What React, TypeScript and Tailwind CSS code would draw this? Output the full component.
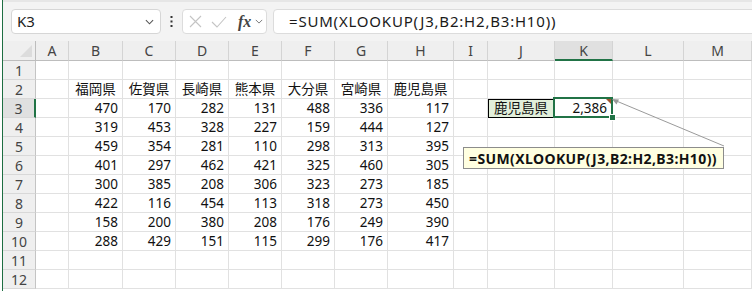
import React from 'react';

const COLS = ['A', 'B', 'C', 'D', 'E', 'F', 'G', 'H', 'I', 'J', 'K', 'L', 'M'];
const PREFS = ['福岡県', '佐賀県', '長崎県', '熊本県', '大分県', '宮崎県', '鹿児島県'];
const DATA = [
  [470, 170, 282, 131, 488, 336, 117],
  [319, 453, 328, 227, 159, 444, 127],
  [459, 354, 281, 110, 298, 313, 395],
  [401, 297, 462, 421, 325, 460, 305],
  [300, 385, 208, 306, 323, 273, 185],
  [422, 116, 454, 113, 318, 273, 450],
  [158, 200, 380, 208, 176, 249, 390],
  [288, 429, 151, 115, 299, 176, 417],
];
const FORMULA = '=SUM(XLOOKUP(J3,B2:H2,B3:H10))';

function Chevron({ className }: { className?: string }) {
  return (
    <svg className={className} viewBox="0 0 10 6" fill="none" stroke="currentColor" strokeWidth={1.2}>
      <path d="M1 1l4 4 4-4" />
    </svg>
  );
}

function TopBar() {
  return (
    <div className="h-[41px] bg-[#f3f3f3] border-t-2 border-[#e6e6e6] flex items-start pt-[7px] overflow-hidden">
      {/* Name box */}
      <div className="ml-[8px] w-[150px] h-[25px] shrink-0 bg-white border border-[#d6d6d6] rounded-[4px] flex items-center pl-[5px] pr-[6px]">
        <span className="flex-1 text-[15px] text-[#222]">K3</span>
        <Chevron className="w-[9px] h-[6px] text-[#555]" />
      </div>
      {/* More */}
      <div className="w-[21px] h-[25px] shrink-0 flex items-center justify-center">
        <svg className="w-[3px] h-[11px]" viewBox="0 0 3 11" fill="#333">
          <rect x="0.5" y="0" width="2" height="2" />
          <rect x="0.5" y="4.5" width="2" height="2" />
          <rect x="0.5" y="9" width="2" height="2" />
        </svg>
      </div>
      {/* Cancel / enter / fx */}
      <div className="w-[85px] h-[25px] shrink-0 bg-white border border-[#dcdcdc] rounded-[4px] flex items-center pl-[6px]">
        <svg className="w-[13px] h-[13px]" viewBox="0 0 13 13" fill="none" stroke="#c4c4c4" strokeWidth={1.1}>
          <path d="M1 1l11 11M12 1L1 12" />
        </svg>
        <svg className="ml-[9px] w-[16px] h-[12px]" viewBox="0 0 16 12" fill="none" stroke="#c4c4c4" strokeWidth={1.1}>
          <path d="M1 6l5 5L15 1" />
        </svg>
        <span className="ml-[11px] font-['Liberation_Serif',serif] italic font-bold text-[16px] leading-none text-[#444]">fx</span>
        <Chevron className="ml-[4px] w-[8px] h-[5px] text-[#777]" />
      </div>
      {/* Formula */}
      <div className="ml-[6px] w-[490px] h-[25px] shrink-0 bg-white border border-[#dcdcdc] rounded-l-[4px] flex items-center pl-[15px]">
        <span className="text-[15px] tracking-[0.8px] text-[#1a1a1a] whitespace-nowrap">{FORMULA}</span>
      </div>
    </div>
  );
}

function Grid() {
  const rows: React.ReactNode[] = [];

  // Column header row
  rows.push(
    <div key="corner" className="h-[20px] bg-[#efefef] border-r border-b border-[#bdbdbd] relative">
      <div className="absolute right-[3px] bottom-[3px] w-0 h-0 border-l-[12px] border-l-transparent border-b-[12px] border-b-[#dcdcdc]" />
    </div>
  );
  COLS.forEach((c) => {
    const sel = c === 'K';
    rows.push(
      <div
        key={'h' + c}
        className={`h-[20px] flex items-center justify-center text-[14px] text-[#444] border-r border-[#d4d4d4] ${
          sel ? 'bg-[#e0e0e0] border-b-2 border-b-[#217346]' : 'bg-[#efefef] border-b border-b-[#bdbdbd]'
        }`}
      >
        {c}
      </div>
    );
  });

  for (let r = 1; r <= 12; r++) {
    const sel = r === 3;
    rows.push(
      <div
        key={'r' + r}
        className={`h-[19px] flex items-center justify-center text-[14px] text-[#444] border-b border-[#d8d8d8] ${
          sel ? 'bg-[#e0e0e0] border-r-2 border-r-[#217346]' : 'bg-[#efefef] border-r border-r-[#c4c4c4]'
        }`}
      >
        {r}
      </div>
    );
    COLS.forEach((c, ci) => {
      let content: React.ReactNode = null;
      let extra = '';
      const dataCol = ci - 1; // B = 0
      if (r === 2 && dataCol >= 0 && dataCol < 7) {
        content = <span className="w-full text-center">{PREFS[dataCol]}</span>;
      } else if (r >= 3 && r <= 10 && dataCol >= 0 && dataCol < 7) {
        content = <span className="w-full text-right pr-[4px]">{DATA[r - 3][dataCol]}</span>;
      } else if (r === 3 && c === 'J') {
        extra = 'bg-[#e2efda] outline outline-1 outline-black -outline-offset-1';
        content = <span className="w-full text-center">鹿児島県</span>;
      } else if (r === 3 && c === 'K') {
        extra = 'relative';
        content = (
          <>
            <span className="w-full text-right pr-[5px]">2,386</span>
            <div className="absolute -left-[2px] -top-[2px] right-[-1px] bottom-[-1px] border-2 border-[#217346]" />
            <div className="absolute right-[1px] top-[0px] w-0 h-0 border-l-[5px] border-l-transparent border-t-[5px] border-t-[#a0522d]" />
            <div className="absolute right-[-4px] bottom-[-4px] w-[7px] h-[7px] bg-[#217346] border border-white" />
          </>
        );
      }
      rows.push(
        <div
          key={c + r}
          className={`h-[19px] flex items-center text-[13.5px] text-[#111] border-r border-b border-[#e1e1e1] whitespace-nowrap ${extra}`}
        >
          {content}
        </div>
      );
    });
  }

  return (
    <div className="grid grid-cols-[33px_33px_54px_53px_53px_53px_53px_53px_66px_34px_67px_58px_71px_1fr]">
      {rows}
    </div>
  );
}

function Note() {
  return (
    <>
      <svg className="absolute left-0 top-0 w-[749px] h-[291px] pointer-events-none" viewBox="0 0 749 291">
        <line x1="611" y1="100" x2="721" y2="146" stroke="#9a9a9a" strokeWidth={1} />
        <path d="M609 99l7 0.5-2.5 5z" fill="#9a9a9a" />
      </svg>
      <div className="absolute left-[460px] top-[147px] w-[261px] h-[22px] bg-[#ffffe1] border border-[#8c8c8c] flex items-center pl-[5px]">
        <span className="text-[14px] tracking-[0.4px] font-bold text-[#111] whitespace-nowrap">{FORMULA}</span>
      </div>
    </>
  );
}

export default function App() {
  return (
    <div className="w-[752px] h-[291px] overflow-hidden bg-white font-['Noto_Sans','Noto_Sans_CJK_JP',sans-serif]">
      <div className="ml-[2px] h-full border-l border-[#1e6e42] relative">
        <TopBar />
        <Grid />
        <Note />
      </div>
    </div>
  );
}
